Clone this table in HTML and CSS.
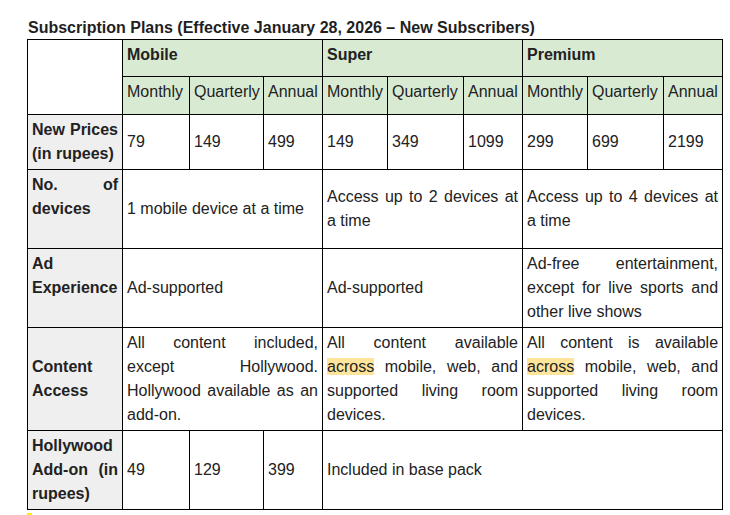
FILE: index.html
```html
<!DOCTYPE html>
<html>
<head>
<meta charset="utf-8">
<link rel="stylesheet" href="styles.css">
</head>
<body>
<div class="page">
  <h1 class="title">Subscription Plans (Effective January 28, 2026 – New Subscribers)</h1>
  <table class="plans">
    <colgroup>
      <col class="c-label">
      <col class="c-m1"><col class="c-q1"><col class="c-a1">
      <col class="c-m"><col class="c-q"><col class="c-a">
      <col class="c-m"><col class="c-q"><col class="c-a">
    </colgroup>
    <tr>
      <td class="blank" rowspan="2"></td>
      <td class="head plan" colspan="3">Mobile</td>
      <td class="head plan" colspan="3">Super</td>
      <td class="head plan" colspan="3">Premium</td>
    </tr>
    <tr class="sub">
      <td class="head">Monthly</td><td class="head">Quarterly</td><td class="head">Annual</td>
      <td class="head">Monthly</td><td class="head">Quarterly</td><td class="head">Annual</td>
      <td class="head">Monthly</td><td class="head">Quarterly</td><td class="head">Annual</td>
    </tr>
    <tr>
      <td class="label">New Prices (in rupees)</td>
      <td>79</td><td>149</td><td>499</td>
      <td>149</td><td>349</td><td>1099</td>
      <td>299</td><td>699</td><td>2199</td>
    </tr>
    <tr class="r3">
      <td class="label top">No. of devices</td>
      <td colspan="3">1 mobile device at a time</td>
      <td colspan="3" class="just">Access up to 2 devices at a time</td>
      <td colspan="3" class="just">Access up to 4 devices at a time</td>
    </tr>
    <tr class="r3">
      <td class="label top">Ad Experience</td>
      <td colspan="3">Ad-supported</td>
      <td colspan="3">Ad-supported</td>
      <td colspan="3" class="just">Ad-free entertainment, except for live sports and other live shows</td>
    </tr>
    <tr>
      <td class="label">Content Access</td>
      <td colspan="3" class="just">All content included, except Hollywood. Hollywood available as an add-on.</td>
      <td colspan="3" class="just">All content available <span class="hl">across</span> mobile, web, and supported living room devices.</td>
      <td colspan="3" class="just">All content is available <span class="hl">across</span> mobile, web, and supported living room devices.</td>
    </tr>
    <tr>
      <td class="label">Hollywood Add-on (in rupees)</td>
      <td>49</td><td>129</td><td>399</td>
      <td colspan="6">Included in base pack</td>
    </tr>
  </table>
  <div class="mark"></div>
</div>
</body>
</html>
```
FILE: styles.css
```css
html, body {
  margin: 0;
  padding: 0;
  background: #ffffff;
}
.page {
  padding: 19px 0 0 27px;
  font-family: "Liberation Sans", Arial, sans-serif;
  color: #222222;
}
.title {
  margin: 0 0 2px 1px;
  font-size: 16px;
  line-height: 18px;
  font-weight: bold;
  color: #1f1f1f;
}
.plans {
  border-collapse: collapse;
  table-layout: fixed;
  width: 696px;
  font-size: 16px;
  line-height: 24px;
}
.c-label { width: 95px; }
.c-m1 { width: 67px; }
.c-q1 { width: 74px; }
.c-a1 { width: 59px; }
.c-m { width: 65px; }
.c-q { width: 76px; }
.c-a { width: 59px; }
.plans td {
  border: 1px solid #000;
  padding: 3px 4px;
  vertical-align: middle;
  text-align: left;
  overflow: hidden;
  white-space: normal;
}
.plans td.head {
  background: #d9ead3;
  padding: 3px 4px 9px;
  white-space: nowrap;
}
.plans .sub td.head {
  padding-bottom: 10px;
}
.plans td.plan {
  font-weight: bold;
}
.plans td.label {
  background: #efefef;
  font-weight: bold;
  text-align: justify;
}
.plans td.top {
  vertical-align: top;
}
.plans td.just {
  text-align: justify;
}
.r3 td {
  height: 72px;
}
.hl {
  background: #ffe599;
}
.mark {
  width: 5px;
  height: 3px;
  margin-top: 3px;
  background: #ffee00;
}
```
